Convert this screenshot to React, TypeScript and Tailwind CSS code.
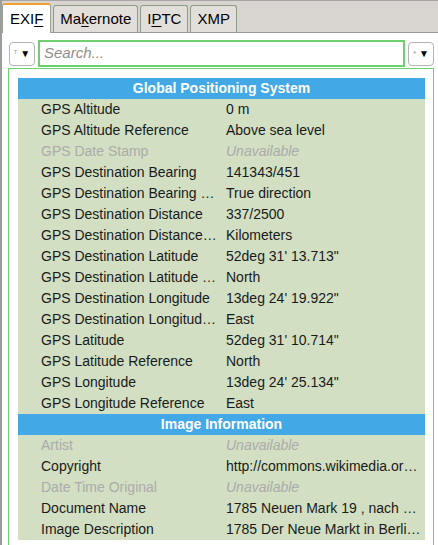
type Row = { label: string; value: string; missing?: boolean };

const gps: Row[] = [
  { label: "GPS Altitude", value: "0 m" },
  { label: "GPS Altitude Reference", value: "Above sea level" },
  { label: "GPS Date Stamp", value: "Unavailable", missing: true },
  { label: "GPS Destination Bearing", value: "141343/451" },
  { label: "GPS Destination Bearing Reference", value: "True direction" },
  { label: "GPS Destination Distance", value: "337/2500" },
  { label: "GPS Destination Distance Reference", value: "Kilometers" },
  { label: "GPS Destination Latitude", value: "52deg 31' 13.713\"" },
  { label: "GPS Destination Latitude Reference", value: "North" },
  { label: "GPS Destination Longitude", value: "13deg 24' 19.922\"" },
  { label: "GPS Destination Longitude Reference", value: "East" },
  { label: "GPS Latitude", value: "52deg 31' 10.714\"" },
  { label: "GPS Latitude Reference", value: "North" },
  { label: "GPS Longitude", value: "13deg 24' 25.134\"" },
  { label: "GPS Longitude Reference", value: "East" },
];

const image: Row[] = [
  { label: "Artist", value: "Unavailable", missing: true },
  { label: "Copyright", value: "http://commons.wikimedia.org/wiki/File:Neuer_Markt.jpg" },
  { label: "Date Time Original", value: "Unavailable", missing: true },
  { label: "Document Name", value: "1785 Neuen Mark 19 , nach einem Stich" },
  { label: "Image Description", value: "1785 Der Neue Markt in Berlin mit der Marienkirche" },
];

const tabs = [
  { name: "EXIF", key: "F" },
  { name: "Makernote", key: "k" },
  { name: "IPTC", key: "P" },
  { name: "XMP", key: "" },
];

function Tab({ name, key2, active }: { name: string; key2: string; active?: boolean }) {
  const i = key2 ? name.indexOf(key2) : -1;
  return (
    <div
      className={
        active
          ? "h-[30px] -mb-px px-[7px] pt-[3px] bg-white border border-b-0 border-[#9aa694] border-t-2 border-t-[#f0a030] rounded-t-[3px] text-[15px] text-black"
          : "h-[27px] px-[6px] pt-[2px] bg-[#e2dfdb] border border-b-0 border-[#8f9c8a] rounded-t-[3px] text-[15px] text-black"
      }
    >
      {i >= 0 ? (
        <>
          {name.slice(0, i)}
          <span className="underline underline-offset-2">{name[i]}</span>
          {name.slice(i + 1)}
        </>
      ) : (
        name
      )}
    </div>
  );
}

function Dropdown({ glyph }: { glyph: string }) {
  return (
    <div className="w-[26px] h-[24px] border border-[#b4b4b4] rounded-[4px] bg-white flex items-center justify-center gap-[3px]">
      <span className="text-[8px] text-[#999]">{glyph}</span>
      <span className="text-[10px] text-black leading-none">▼</span>
    </div>
  );
}

function Header({ title }: { title: string }) {
  return (
    <div className="h-[21px] bg-[#42a9e6] text-white font-bold text-[14px] leading-[21px] text-center">
      {title}
    </div>
  );
}

function Line({ row }: { row: Row }) {
  return (
    <div className={"h-[21px] flex text-[14px] leading-[21px] " + (row.missing ? "text-[#ababab]" : "text-[#1a1a1a]")}>
      <div className="w-[199px] pl-[23px] truncate shrink-0">{row.label}</div>
      <div className={"flex-1 min-w-0 pl-[9px] pr-[4px] truncate " + (row.missing ? "italic" : "")}>{row.value}</div>
    </div>
  );
}

export default function App() {
  return (
    <div className="w-[438px] h-[545px] overflow-hidden bg-white border-l-2 border-[#9c9c9c] flex flex-col font-['Liberation_Sans',sans-serif]">
      <div className="h-[33px] shrink-0 bg-[#d8d4d0] border-t border-[#a8a6a4] border-b border-b-[#9a9894] flex items-end gap-[2px]">
        {tabs.map((t, i) => (
          <Tab key={t.name} name={t.name} key2={t.key} active={i === 0} />
        ))}
      </div>
      <div className="flex-1 flex flex-col pl-[6px] pr-[4px] pt-[7px]">
        <div className="flex items-center gap-[3px] pl-[1px]">
          <Dropdown glyph="ᵀ" />
          <div className="flex-1 h-[27px] border-2 border-[#6cd06c] flex items-center px-[4px]">
            <span className="italic text-[#8e8e8e] text-[15px]">Search...</span>
          </div>
          <Dropdown glyph="*" />
        </div>
        <div className="flex-1 mt-px border border-b-0 border-[#6cd06c] pt-[9px] pl-[9px] pr-[8px]">
          <div className="bg-[#d2dfc2]">
            <Header title="Global Positioning System" />
            {gps.map((r) => (
              <Line key={r.label} row={r} />
            ))}
            <Header title="Image Information" />
            {image.map((r) => (
              <Line key={r.label} row={r} />
            ))}
          </div>
        </div>
      </div>
    </div>
  );
}
